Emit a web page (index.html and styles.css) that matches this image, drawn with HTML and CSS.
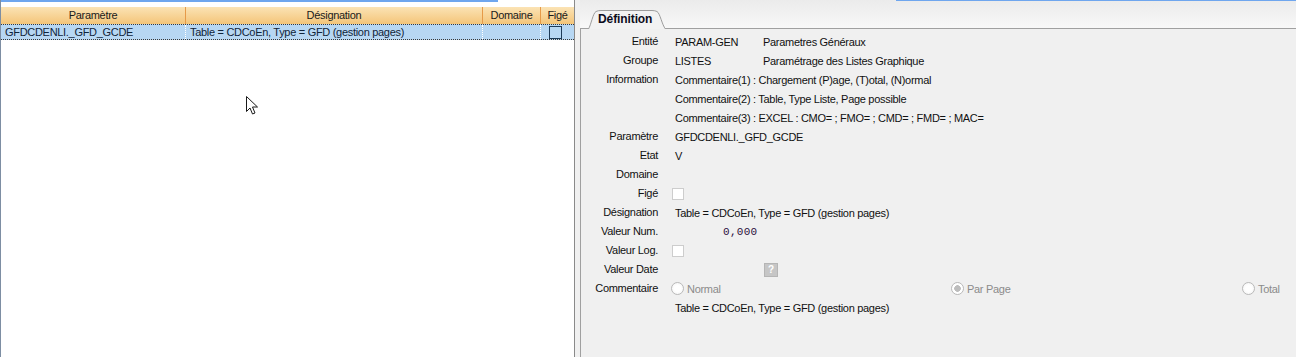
FILE: index.html
```html
<!DOCTYPE html>
<html lang="fr">
<head>
  <meta charset="UTF-8">
  <title>Paramètres</title>
  <link rel="stylesheet" href="styles.css">
</head>
<body>

  <div class="list">
    <div class="list-head">
      <div class="col">Paramètre</div>
      <div class="col">Désignation</div>
      <div class="col">Domaine</div>
      <div class="col">Figé</div>
    </div>
    <div class="list-row selected">
      <div class="cell">GFDCDENLI._GFD_GCDE</div>
      <div class="cell">Table = CDCoEn, Type = GFD (gestion pages)</div>
      <div class="cell"></div>
      <div class="cell center"><span class="rowbox"></span></div>
    </div>
    <svg class="cursor" width="13" height="20" viewBox="0 0 13 20">
      <path d="M0.5 0.5 L0.5 15.5 L4 12 L6.5 18 L9 17 L6.5 11 L11.5 11 Z" fill="#fff" stroke="#1a1a1a" stroke-width="1" stroke-linejoin="miter"/>
    </svg>
  </div>

  <div class="right">
    <div class="tabbar">
      <div class="tab">
        <svg class="tab-shape" width="78" height="20" viewBox="0 0 78 20">
          <path d="M0.5 20 C3 16 5 4 8 2.5 Q10 1.5 13 1.5 L64 1.5 Q67 1.5 69 2.5 C72 4 74 16 77.5 20" fill="#f2f2f2" stroke="#9c9c9c"/>
        </svg>
        <span class="tab-label">Définition</span>
      </div>
    </div>

    <div class="panel">
      <div class="form">
        <div class="lbl">Entité</div>
        <div class="val"><span class="code">PARAM-GEN</span>Parametres Généraux</div>

        <div class="lbl">Groupe</div>
        <div class="val"><span class="code">LISTES</span>Paramétrage des Listes Graphique</div>

        <div class="lbl">Information</div>
        <div class="val">Commentaire(1) : Chargement (P)age, (T)otal, (N)ormal</div>
        <div class="lbl"></div>
        <div class="val">Commentaire(2) : Table, Type Liste, Page possible</div>
        <div class="lbl"></div>
        <div class="val">Commentaire(3) : EXCEL : CMO= ; FMO= ; CMD= ; FMD= ; MAC=</div>

        <div class="lbl">Paramètre</div>
        <div class="val">GFDCDENLI._GFD_GCDE</div>

        <div class="lbl">Etat</div>
        <div class="val">V</div>

        <div class="lbl">Domaine</div>
        <div class="val"></div>

        <div class="lbl">Figé</div>
        <div class="val"><span class="checkbox"></span></div>

        <div class="lbl">Désignation</div>
        <div class="val">Table = CDCoEn, Type = GFD (gestion pages)</div>

        <div class="lbl">Valeur Num.</div>
        <div class="val"><span class="num">0,000</span></div>

        <div class="lbl">Valeur Log.</div>
        <div class="val"><span class="checkbox"></span></div>

        <div class="lbl">Valeur Date</div>
        <div class="val"><span class="help">?</span></div>

        <div class="lbl">Commentaire</div>
        <div class="val radios">
          <label class="opt"><span class="radio"></span>Normal</label>
          <label class="opt"><span class="radio on"></span>Par Page</label>
          <label class="opt"><span class="radio"></span>Total</label>
        </div>

        <div class="lbl"></div>
        <div class="val">Table = CDCoEn, Type = GFD (gestion pages)</div>
      </div>
    </div>
  </div>

</body>
</html>
```

FILE: styles.css
```css
body {
  margin: 0;
  width: 1296px;
  height: 357px;
  overflow: hidden;
  display: flex;
  background: #f0f0f0;
  font-family: 'Liberation Sans', Arial, sans-serif;
  font-size: 11px;
  letter-spacing: -0.3px;
  color: #111;
}

/* liste de gauche */

.list {
  position: relative;
  width: 575px;
  box-sizing: border-box;
  padding-top: 7px;
  background: linear-gradient(#6fa6ee, #6fa6ee) no-repeat 0 0 / 497px 2px, #fff;
  border-left: 1px solid #7d8ea3;
  border-right: 1px solid #8a8a8a;
}

.list-head,
.list-row {
  display: grid;
  grid-template-columns: 185px 297px 58px 33px;
}

.list-head {
  height: 17px;
  background: linear-gradient(#fbe3b5, #f4c579);
}

.list-head .col {
  border-right: 1px solid #e69a48;
  text-align: center;
  line-height: 17px;
  color: #1a1a1a;
}

.list-head .col:last-child {
  border-right: none;
}

.list-row {
  height: 14px;
  background: #b7d7f3;
  border-top: 1px dotted #3a3a3a;
  border-bottom: 1px dotted #3a3a3a;
  color: #10243a;
}

.list-row .cell {
  border-right: 1px dotted #fff;
  padding-left: 4px;
  line-height: 14px;
  white-space: nowrap;
  overflow: hidden;
}

.list-row .cell:last-child {
  border-right: none;
}

.list-row .center {
  padding-left: 8px;
  display: flex;
  align-items: center;
}

.rowbox {
  width: 11px;
  height: 11px;
  border: 1px solid #1d3b58;
}

.cursor {
  position: absolute;
  left: 245px;
  top: 96px;
}

/* partie droite */

.right {
  flex: 1;
  margin-left: 5px;
  display: flex;
  flex-direction: column;
}

.tabbar {
  height: 28px;
  display: flex;
  align-items: flex-end;
  padding-left: 8px;
  background: linear-gradient(#6fa6ee, #6fa6ee) no-repeat 100% 0 / 400px 1px, linear-gradient(#ebebeb, #f8f8f8);
  border-bottom: 1px solid #a0a0a0;
}

.tab {
  display: grid;
  width: 78px;
  height: 20px;
  margin-bottom: -1px;
}

.tab-shape,
.tab-label {
  grid-area: 1 / 1;
}

.tab-label {
  font-size: 12px;
  font-weight: bold;
  letter-spacing: -0.1px;
  color: #0c0c1c;
  padding: 3px 0 0 10px;
}

.panel {
  flex: 1;
  border-left: 1px solid #a0a0a0;
}

.form {
  display: grid;
  grid-template-columns: 77px 1fr;
  grid-auto-rows: 19px;
  column-gap: 17px;
  padding-top: 3px;
}

.lbl {
  text-align: right;
  line-height: 19px;
  white-space: nowrap;
}

.val {
  display: flex;
  align-items: center;
  white-space: nowrap;
}

.code {
  width: 88px;
}

.checkbox {
  width: 10px;
  height: 10px;
  margin-left: -3px;
  border: 1px solid #cdcdcd;
  background: #fff;
}

.num {
  margin-left: 48px;
  font-family: 'Liberation Mono', monospace;
  letter-spacing: 0.3px;
  color: #2c0f3c;
}

.help {
  margin-left: 89px;
  width: 12px;
  height: 12px;
  border: 1px solid #b5b5b5;
  background: #c6c6c6;
  color: #fff;
  font-weight: bold;
  font-size: 10px;
  text-align: center;
  line-height: 12px;
}

.radios {
  display: grid;
  grid-template-columns: 280px 291px auto;
  margin-left: -4px;
}

.opt {
  display: flex;
  align-items: center;
  gap: 3px;
  color: #8b8b8b;
}

.radio {
  width: 11px;
  height: 11px;
  border: 1px solid #b9b9b9;
  border-radius: 50%;
  background: radial-gradient(circle, #fff 0 3px, #f6f6f6 6px);
}

.radio.on {
  background: radial-gradient(circle, #bdbdbd 0 3px, #fff 3.6px);
}
```
